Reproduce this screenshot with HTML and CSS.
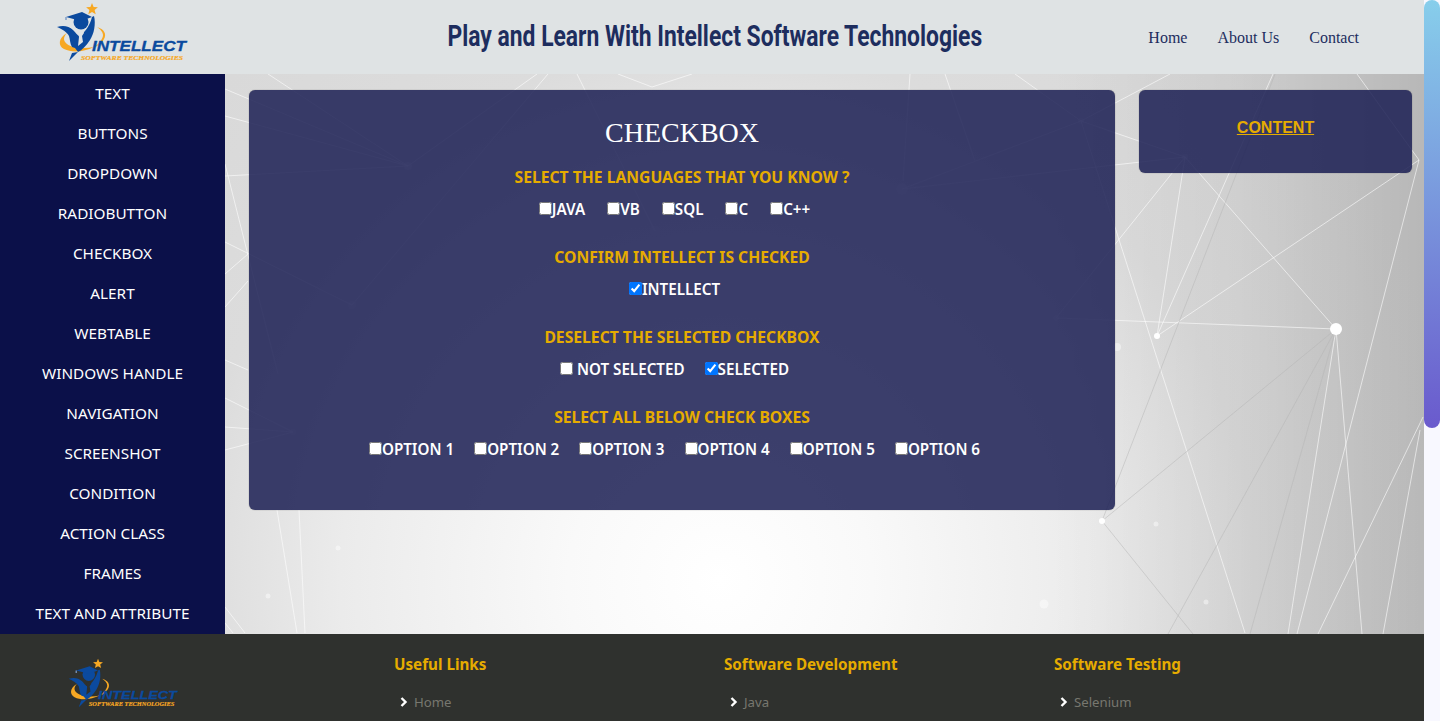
FILE: index.html
```html
<!DOCTYPE html>
<html lang="en">
<head>
    <meta charset="UTF-8">
    <title>Checkbox</title>
    <link rel="stylesheet" href="styles.css">
</head>
<body>
    <svg class="defs" width="0" height="0">
        <symbol id="intellect-logo" viewBox="55 0 136 64">
            <path d="M92 3l1.6 4 4.3.3-3.3 2.7 1.1 4.2-3.7-2.3-3.7 2.3 1.1-4.2-3.3-2.7 4.3-.3z" fill="#f7a823"/>
            <path d="M67 33C58 38 58 46 64 49C72 53 84 52 94 47C84 49 72 48 67 44C63 41 63 37 67 33Z" fill="#f7a823"/>
            <path d="M97 27C104 29 107 34 104 39C102 43 99 45 95 47C99 43 103 39 103 35C103 32 100 29 97 27Z" fill="#f7a823"/>
            <path d="M57 27C63 25 69 26 73 30C76 33 77 35 79 36C85 33 90 25 92 17L94 16C96 24 94 34 90 40C86 46 82 50 78 52L75 48L72 47C70 44 70 39 69 36C67 32 62 29 57 27Z" fill="#0b4a9e"/>
            <circle cx="81" cy="22" r="7.5" fill="#0b4a9e"/>
            <path d="M66 17L82 12L92 17L81 21Z" fill="#0b4a9e"/>
            <path d="M66 17v3" stroke="#7d9cc8" stroke-width="1.5"/>
            <path d="M78 32L83 30L84 33L82 36L83 42L78 46L79 37Z" fill="currentColor"/>
            <path d="M69 61L72 53L78 52Z" fill="#0b4a9e"/>
            <text x="92" y="51" class="logo-name" textLength="94" lengthAdjust="spacingAndGlyphs">INTELLECT</text>
            <text x="81" y="60" class="logo-sub" textLength="102" lengthAdjust="spacingAndGlyphs">SOFTWARE TECHNOLOGIES</text>
        </symbol>
    </svg>

    <div class="page">
        <header class="topbar">
            <a class="logo" href="#">
                <svg width="136" height="64"><use href="#intellect-logo"/></svg>
            </a>
            <h1 class="site-title"><span>Play and Learn With Intellect Software Technologies</span></h1>
            <nav class="topnav">
                <a href="#">Home</a>
                <a href="#">About Us</a>
                <a href="#">Contact</a>
            </nav>
        </header>

        <div class="middle">
            <ul class="sidebar">
                <li><a href="#">TEXT</a></li>
                <li><a href="#">BUTTONS</a></li>
                <li><a href="#">DROPDOWN</a></li>
                <li><a href="#">RADIOBUTTON</a></li>
                <li><a href="#">CHECKBOX</a></li>
                <li><a href="#">ALERT</a></li>
                <li><a href="#">WEBTABLE</a></li>
                <li><a href="#">WINDOWS HANDLE</a></li>
                <li><a href="#">NAVIGATION</a></li>
                <li><a href="#">SCREENSHOT</a></li>
                <li><a href="#">CONDITION</a></li>
                <li><a href="#">ACTION CLASS</a></li>
                <li><a href="#">FRAMES</a></li>
                <li><a href="#">TEXT AND ATTRIBUTE</a></li>
            </ul>

            <main class="content">
                <svg class="network" width="1199" height="560" viewBox="225 74 1199 560">
                    <defs>
                        <radialGradient id="bgGrad" gradientUnits="userSpaceOnUse" cx="720" cy="580" r="760">
                            <stop offset="0" stop-color="#ffffff"/>
                            <stop offset="0.2" stop-color="#f9f9f9"/>
                            <stop offset="0.5" stop-color="#ebebeb"/>
                            <stop offset="0.7" stop-color="#dcdcdc"/>
                            <stop offset="1" stop-color="#d8d8d8"/>
                        </radialGradient>
                        <linearGradient id="bgShade" gradientUnits="userSpaceOnUse" x1="1050" y1="0" x2="1424" y2="0">
                            <stop offset="0" stop-color="#000" stop-opacity="0"/>
                            <stop offset="0.5" stop-color="#000" stop-opacity="0.05"/>
                            <stop offset="1" stop-color="#000" stop-opacity="0.15"/>
                        </linearGradient>
                    </defs>
                    <rect x="225" y="74" width="1199" height="560" fill="url(#bgGrad)"/>
                    <rect x="1050" y="74" width="374" height="560" fill="url(#bgShade)"/>
                    <g class="net-light">
                        <path d="M1185 157L1336 329M1157 336L1419 160M1419 160L1297 634M1185 157L1056 318M1185 157L1157 336M1157 336L1273 74"/>
                        <path d="M1081 121L1245 633M1056 318L1336 329M1336 329L1288 634M1336 329L1362 634M1423 417L1318 634M1420 430L1383 634"/>
                        <path d="M1170 74L1081 121M1081 121L1185 157M902 189L1185 157M902 189L1081 121M1015 74L1081 121M1357 74L1419 160"/>
                        <path d="M910 74L903 181M945 74L975 161"/>
                        <path d="M268 74L408 166M225 89L408 166M225 116L408 166M225 176L408 166M537 74L408 166M548 74L352 305M577 74L655 231M618 74L652 87L692 74"/>
                        <path d="M225 242L352 305M225 164L278 374M225 274L248 254M225 307L248 281M225 398L293 432M225 427L293 432M225 450L293 432M225 360L248 370"/>
                        <path d="M277 510L297 633M299 510L305 633M225 607L245 633M225 623L233 633"/>
                    </g>
                    <g class="net-dark">
                        <path d="M1336 329L1102 521M1336 329L1168 634M1336 329L1250 634M1275 74L1102 521M1102 521L1193 634"/>
                    </g>
                    <g fill="#fff">
                        <circle cx="1336" cy="329" r="6"/>
                        <circle cx="1157" cy="336" r="3"/>
                        <circle cx="1102" cy="521" r="3"/>
                        <g opacity="0.45">
                            <circle cx="1117" cy="347" r="4"/>
                            <circle cx="1156" cy="524" r="2.5"/>
                            <circle cx="1044" cy="604" r="4.5"/>
                            <circle cx="1206" cy="602" r="2.5"/>
                            <circle cx="338" cy="548" r="2.5"/>
                            <circle cx="268" cy="596" r="2.5"/>
                        </g>
                        <g opacity="0.3">
                            <circle cx="408" cy="166" r="4"/>
                            <circle cx="352" cy="305" r="4"/>
                            <circle cx="655" cy="231" r="5"/>
                            <circle cx="902" cy="189" r="6"/>
                            <circle cx="1081" cy="121" r="3"/>
                            <circle cx="1056" cy="318" r="3"/>
                            <circle cx="1185" cy="157" r="3"/>
                            <circle cx="293" cy="432" r="3"/>
                        </g>
                    </g>
                </svg>

                <section class="panel main-panel">
                    <h2 class="panel-title">CHECKBOX</h2>

                    <h3 class="question">SELECT THE LANGUAGES THAT YOU KNOW ?</h3>
                    <div class="options wide">
                        <label><input type="checkbox">JAVA</label>
                        <label><input type="checkbox">VB</label>
                        <label><input type="checkbox">SQL</label>
                        <label><input type="checkbox">C</label>
                        <label><input type="checkbox">C++</label>
                    </div>

                    <h3 class="question">CONFIRM INTELLECT IS CHECKED</h3>
                    <div class="options">
                        <label><input type="checkbox" checked>INTELLECT</label>
                    </div>

                    <h3 class="question">DESELECT THE SELECTED CHECKBOX</h3>
                    <div class="options">
                        <label><input type="checkbox" class="spaced">NOT SELECTED</label>
                        <label><input type="checkbox" checked>SELECTED</label>
                    </div>

                    <h3 class="question">SELECT ALL BELOW CHECK BOXES</h3>
                    <div class="options">
                        <label><input type="checkbox">OPTION 1</label>
                        <label><input type="checkbox">OPTION 2</label>
                        <label><input type="checkbox">OPTION 3</label>
                        <label><input type="checkbox">OPTION 4</label>
                        <label><input type="checkbox">OPTION 5</label>
                        <label><input type="checkbox">OPTION 6</label>
                    </div>
                </section>

                <aside class="panel side-panel">
                    <a href="#">CONTENT</a>
                </aside>
            </main>
        </div>

        <footer class="footer">
            <div class="footer-logo">
                <svg width="114" height="54"><use href="#intellect-logo"/></svg>
            </div>
            <div class="footer-col">
                <h4>Useful Links</h4>
                <a href="#"><svg width="8" height="10" viewBox="0 0 8 10"><path d="M1.5 1l4 4-4 4" fill="none" stroke="#fff" stroke-width="2.4"/></svg>Home</a>
            </div>
            <div class="footer-col">
                <h4>Software Development</h4>
                <a href="#"><svg width="8" height="10" viewBox="0 0 8 10"><path d="M1.5 1l4 4-4 4" fill="none" stroke="#fff" stroke-width="2.4"/></svg>Java</a>
            </div>
            <div class="footer-col">
                <h4>Software Testing</h4>
                <a href="#"><svg width="8" height="10" viewBox="0 0 8 10"><path d="M1.5 1l4 4-4 4" fill="none" stroke="#fff" stroke-width="2.4"/></svg>Selenium</a>
            </div>
        </footer>
    </div>

    <div class="scrollbar"><div class="thumb"></div></div>
</body>
</html>
```
FILE: styles.css
```css
html, body {
    height: 100%;
}
body {
    display: flex;
    margin: 0;
    overflow: hidden;
    font-family: "Noto Sans", "Open Sans", sans-serif;
    background-color: #f8f8ff;
}
a {
    text-decoration: none;
}
.defs {
    display: block;
    width: 0;
    height: 0;
}
.page {
    flex: 1;
    min-width: 0;
    height: 721px;
    overflow: hidden;
}
.scrollbar {
    width: 16px;
    background-color: #f8f8ff;
}
.thumb {
    height: 428px;
    border-radius: 8px;
    background: linear-gradient(to bottom, #87ceeb, #6a5acd);
}

/* top bar */
.topbar {
    display: flex;
    align-items: center;
    height: 74px;
    background-color: #dfe3e4;
}
.logo {
    display: block;
    align-self: flex-start;
    width: 136px;
    height: 64px;
    margin-left: 55px;
    color: #dfe3e4;
}
symbol {
    overflow: visible;
}
.logo-name {
    font-family: "Liberation Sans", Arial, sans-serif;
    font-size: 14px;
    font-weight: bold;
    font-style: italic;
    fill: #0b4a9e;
    stroke: #0b4a9e;
    stroke-width: 0.3;
}
.logo-sub {
    font-family: "Liberation Serif", serif;
    font-size: 7px;
    font-weight: bold;
    font-style: italic;
    fill: #f7a823;
    stroke: #f7a823;
    stroke-width: 0.2;
}
.site-title {
    flex: 1;
    margin: 0;
    padding: 0 0 4px 91px;
    text-align: center;
    font-family: Roboto, "Liberation Sans", sans-serif;
    font-size: 30px;
    font-weight: 700;
    color: #1d2d5e;
}
.site-title span {
    display: inline-block;
    white-space: nowrap;
    transform: scaleX(0.762);
}
.topnav {
    display: flex;
    gap: 30px;
    padding: 2px 65px 0 0;
}
.topnav a {
    font-family: "Liberation Serif", serif;
    font-size: 16px;
    color: #1d2d5e;
}

/* sidebar and content */
.middle {
    display: flex;
    height: 560px;
}
.sidebar {
    width: 225px;
    margin: 0;
    padding: 0;
    list-style: none;
    background-color: #0b1049;
}
.sidebar li {
    height: 40px;
    line-height: 38px;
    text-align: center;
}
.sidebar a {
    font-size: 15.3px;
    color: #fff;
}
.content {
    position: relative;
    flex: 1;
    display: flex;
    align-items: flex-start;
    gap: 24px;
    padding: 16px 12px 0 24px;
}
.network {
    position: absolute;
    top: 0;
    left: 0;
}
.net-light path {
    fill: none;
    stroke: #fff;
    stroke-width: 0.9;
    opacity: 0.65;
}
.net-dark path {
    fill: none;
    stroke: #b4b4b4;
    stroke-width: 0.8;
    opacity: 0.6;
}
.panel {
    position: relative;
    box-sizing: border-box;
    border-radius: 6px;
    background-color: rgba(26, 29, 82, 0.85);
    box-shadow: 0 0 1px rgba(0, 0, 0, 0.6);
    text-align: center;
}
.main-panel {
    width: 866px;
    height: 420px;
    padding-top: 24px;
}
.panel-title {
    margin: 0 0 14px;
    font-family: "Liberation Serif", serif;
    font-size: 28px;
    font-weight: normal;
    line-height: 38px;
    color: #fff;
}
.question {
    margin: 0;
    height: 24px;
    line-height: 22px;
    font-size: 15.7px;
    font-weight: bold;
    color: #e6ac00;
}
.options {
    display: flex;
    justify-content: center;
    gap: 20px;
    height: 56px;
    padding: 8px 15px 0 0;
    box-sizing: border-box;
}
.options.wide {
    gap: 22px;
}
.options label {
    height: 24px;
    line-height: 22px;
    font-size: 15.2px;
    font-weight: 600;
    color: #fff;
}
.options input {
    width: 13px;
    height: 13px;
    margin: 0;
}
.options input.spaced {
    margin-right: 4px;
}
.side-panel {
    width: 273px;
    height: 83px;
    padding-top: 29px;
    font-family: "Liberation Sans", Arial, sans-serif;
    font-size: 16px;
    font-weight: bold;
}
.side-panel a {
    color: #e6ac00;
    text-decoration: underline;
}

/* footer */
.footer {
    display: grid;
    grid-template-columns: 394px 330px 330px 1fr;
    height: 87px;
    background-color: #2f312e;
}
.footer-logo {
    padding: 22px 0 0 67px;
    color: #2f312e;
}
.footer-col {
    padding-top: 20px;
}
.footer-col h4 {
    margin: 0 0 18px;
    font-size: 15.2px;
    line-height: 20px;
    font-weight: bold;
    color: #e6ac00;
}
.footer-col a {
    display: flex;
    align-items: center;
    gap: 6px;
    padding-left: 6px;
    font-size: 13.2px;
    line-height: 20px;
    color: #77776f;
}
```
